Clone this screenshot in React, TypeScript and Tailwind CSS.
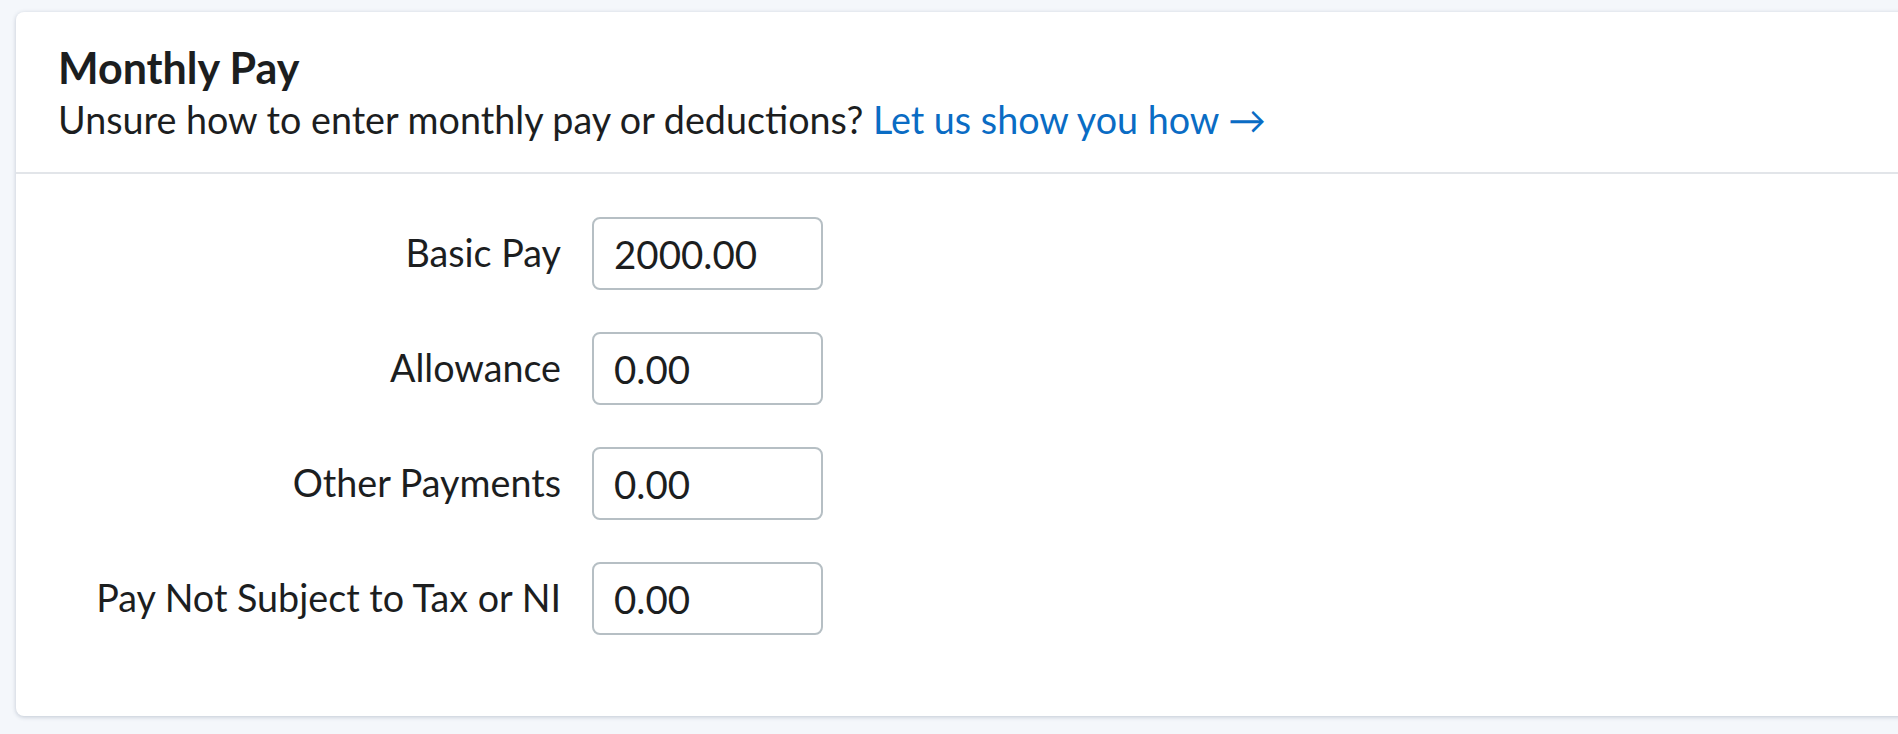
import React from "react";

const rows = [
  { label: "Basic Pay", value: "2000.00" },
  { label: "Allowance", value: "0.00" },
  { label: "Other Payments", value: "0.00" },
  { label: "Pay Not Subject to Tax or NI", value: "0.00" },
];

export default function App() {
  return (
    <div
      className="h-[734px] overflow-hidden bg-[#f4f7fb] pl-4 pt-3"
      style={{ fontFamily: "Lato, 'Noto Sans', sans-serif" }}
    >
      <div className="w-[1900px] h-[704px] bg-white rounded-lg shadow-[0_1px_4px_rgba(40,60,90,0.25)]">
        {/* header */}
        <div className="pl-[42px] pt-[29px] h-[162px] border-b-2 border-[#e2e5e9]">
          <h1 className="text-[43px] leading-[54px] font-bold text-[#1c1e1f]">Monthly Pay</h1>
          <p className="text-[37.7px] leading-[50px] text-[#1c1e1f]">
            Unsure how to enter monthly pay or deductions?{" "}
            <a href="#" className="text-[#0a6cc4]">Let us show you how →</a>
          </p>
        </div>

        {/* form rows */}
        <div className="pt-[43px] flex flex-col gap-[42px]">
          {rows.map((row) => (
            <div key={row.label} className="flex items-center">
              <label className="w-[545px] text-right text-[37.7px] text-[#1c1e1f]">{row.label}</label>
              <input
                defaultValue={row.value}
                className="ml-[31px] w-[231px] h-[73px] rounded-lg border-2 border-[#b6bfc4] pl-5 text-[38.5px] text-[#1c1e1f] outline-none"
              />
            </div>
          ))}
        </div>
      </div>
    </div>
  );
}
